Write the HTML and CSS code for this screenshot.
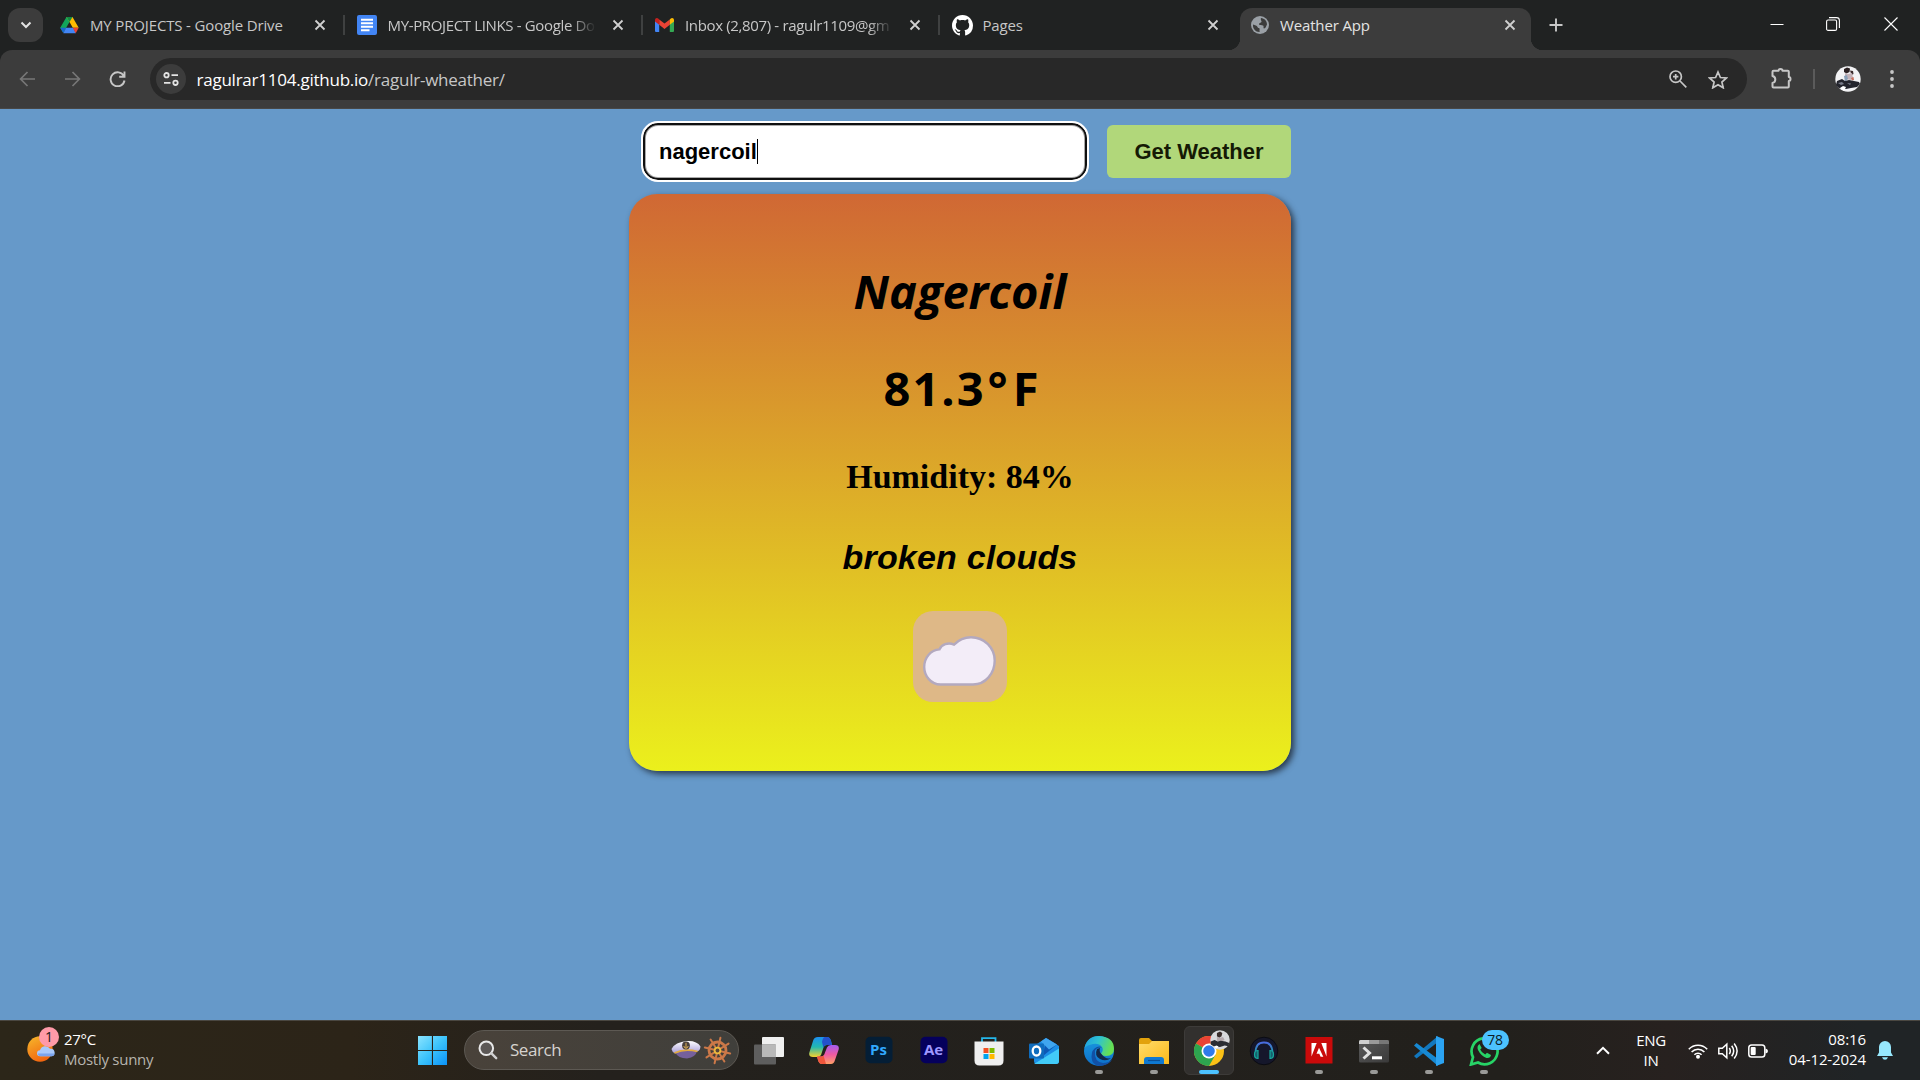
FILE: index.html
```html
<!DOCTYPE html>
<html lang="en">
<head>
<meta charset="utf-8">
<title>Weather App</title>
<link rel="stylesheet" href="styles.css">
</head>
<body>
<svg class="defs" aria-hidden="true">
  <defs>
    <symbol id="close" viewBox="0 0 12 12"><path d="M1.5 1.5l9 9M10.500 1.500l-9 9" fill="none" stroke="currentColor" stroke-width="1.800"/></symbol>
    <linearGradient id="gSun" x1="0" y1="0" x2="0.500" y2="1"><stop offset="0" stop-color="#f6b92c"/><stop offset="1" stop-color="#f2660f"/></linearGradient>
    <linearGradient id="gWin" x1="0" y1="0" x2="1" y2="1"><stop offset="0" stop-color="#8be4ff"/><stop offset="0.500" stop-color="#3cc3fb"/><stop offset="1" stop-color="#0a92f8"/></linearGradient>
    <linearGradient id="gHat" x1="0" y1="0" x2="0" y2="1"><stop offset="0" stop-color="#ffffff"/><stop offset="1" stop-color="#a79bd8"/></linearGradient>
    <linearGradient id="gCopA" x1="0" y1="0" x2="0" y2="1"><stop offset="0" stop-color="#1d8ff0"/><stop offset="0.500" stop-color="#22b8b0"/><stop offset="1" stop-color="#f6d22e"/></linearGradient>
    <linearGradient id="gCopB" x1="0" y1="0" x2="0" y2="1"><stop offset="0" stop-color="#a35cf0"/><stop offset="0.500" stop-color="#ee5aa2"/><stop offset="1" stop-color="#ffa066"/></linearGradient>
    <linearGradient id="gEdge" x1="0" y1="0" x2="1" y2="0.300"><stop offset="0" stop-color="#1c9be4"/><stop offset="0.500" stop-color="#2fc3d0"/><stop offset="1" stop-color="#66e052"/></linearGradient>
    <linearGradient id="gEdgeB" x1="0" y1="0" x2="0" y2="1"><stop offset="0" stop-color="#1b9de2"/><stop offset="1" stop-color="#0d6fc9"/></linearGradient>
    <linearGradient id="gFold" x1="0" y1="0" x2="1" y2="1"><stop offset="0" stop-color="#ffdc6b"/><stop offset="1" stop-color="#fbb918"/></linearGradient>
    <linearGradient id="gHead" x1="0" y1="0" x2="0" y2="1"><stop offset="0" stop-color="#4a6be0"/><stop offset="1" stop-color="#17a79c"/></linearGradient>
    <linearGradient id="gTerm" x1="0" y1="0" x2="1" y2="1"><stop offset="0" stop-color="#5a5a5a"/><stop offset="1" stop-color="#3a3a3a"/></linearGradient>
  </defs>
</svg>

<header class="browser">
  <div class="tab-strip">
    <div class="tab-search"><svg width="12" height="8" viewBox="0 0 12 8"><path d="M1.500 1.500L6 6l4.500-4.500" fill="none" stroke="#e3e3e3" stroke-width="2"/></svg></div>
    <div class="tab">
      <span class="favicon"><svg width="19" height="17" viewBox="0 0 19 17"><path d="M6.500 0h6L9.500 5 3.800 14.800 3 15.500.200 10.800z" fill="#12a55b"/><path d="M6.500 0h6l6.200 10.800h-5.900L9.500 5z" fill="#ffba00"/><path d="M6.500 0h6l-3 5z" fill="#0f8a44"/><path d="M.200 10.800h5.900L3.300 16z" fill="#1967d2"/><path d="M6.100 10.800h7.100l2.600 5.400H3.300z" fill="#4285f4"/><path d="M12.800 10.800h5.900l-3 5.400z" fill="#ea4335"/></svg></span>
      <span class="tab-title">MY PROJECTS - Google Drive</span>
      <svg class="tab-close"><use href="#close"/></svg>
    </div>
    <div class="tab">
      <span class="favicon"><svg width="20" height="20" viewBox="0 0 20 20"><rect width="20" height="20" rx="2" fill="#4285f4"/><path d="M4 4.800h12M4 8.300h12M4 11.800h12M4 15.300h8.500" stroke="#fff" stroke-width="1.900"/></svg></span>
      <span class="tab-title tab-title-fade">MY-PROJECT LINKS - Google Do</span>
      <svg class="tab-close"><use href="#close"/></svg>
    </div>
    <div class="tab">
      <span class="favicon"><svg width="19" height="14" viewBox="0 0 19 14"><path d="M0 2v11q0 1 1 1h3.200V5z" fill="#4285f4"/><path d="M19 2v11q0 1-1 1h-3.200V5z" fill="#34a853"/><path d="M4.200 1.500L9.500 5.600l5.300-4.100v5.200L9.500 11 4.200 6.700z" fill="#ea4335"/><path d="M0 2.200C0 .200 2-.600 3.500.800l.700.600v5.300L0 3.600z" fill="#c5221f"/><path d="M19 2.200c0-2-2-2.800-3.500-1.400l-.700.600v5.300L19 3.600z" fill="#fbbc04"/></svg></span>
      <span class="tab-title tab-title-fade">Inbox (2,807) - ragulr1109@gm</span>
      <svg class="tab-close"><use href="#close"/></svg>
    </div>
    <div class="tab tab-last">
      <span class="favicon"><svg width="21" height="21" viewBox="0 0 16 16"><path fill="#fff" d="M8 0C3.580 0 0 3.580 0 8c0 3.540 2.290 6.530 5.470 7.590.400.070.550-.170.550-.380 0-.190-.010-.820-.010-1.490-2.010.370-2.530-.490-2.690-.940-.090-.230-.480-.940-.820-1.130-.280-.150-.680-.520-.010-.530.630-.010 1.080.580 1.230.820.720 1.210 1.870.870 2.330.660.070-.520.280-.870.510-1.070-1.780-.200-3.640-.890-3.640-3.950 0-.870.310-1.590.820-2.150-.080-.200-.360-1.020.080-2.120 0 0 .670-.210 2.200.820.640-.180 1.320-.270 2-.270s1.360.090 2 .270c1.530-1.040 2.200-.820 2.200-.820.440 1.100.160 1.920.080 2.120.510.560.820 1.270.820 2.150 0 3.070-1.870 3.750-3.650 3.950.290.250.540.730.540 1.480 0 1.070-.010 1.930-.010 2.200 0 .210.150.460.550.380A8.010 8.010 0 0016 8c0-4.420-3.580-8-8-8z"/></svg></span>
      <span class="tab-title">Pages</span>
      <svg class="tab-close"><use href="#close"/></svg>
    </div>
    <div class="tab tab-active">
      <span class="favicon"><svg width="18" height="18" viewBox="0 0 18 18"><circle cx="9" cy="9" r="9" fill="#9aa0a6"/><path d="M2 8.500c2 1 4 1 4.500 2.500s1.500.500 2 1.500-.500 2.500.300 3.500C5 16.300 1.500 13 2 8.500zM10 2c3.500.300 6 3 6 6.500-1 1.500-1 3.500-3 4-1.200-.500.300-2.500-1-3-1.500-.500-3.500.300-4-1.200-.300-1.500 2-1.300 2.500-2.300S9 3.500 10 2z" fill="#3c3c3c"/></svg></span>
      <span class="tab-title">Weather App</span>
      <svg class="tab-close"><use href="#close"/></svg>
    </div>
    <svg class="new-tab" viewBox="0 0 14 14"><path d="M7 .500v13M.500 7h13" stroke="#c7c7c7" stroke-width="1.900"/></svg>
    <div class="window-buttons">
      <svg width="14" height="14" viewBox="0 0 14 14"><path d="M.500 7.500h13" stroke="#fff"/></svg>
      <svg width="14" height="14" viewBox="0 0 14 14"><rect x=".600" y="3" width="10" height="10.400" rx="1.500" fill="none" stroke="#fff" stroke-width="1.100"/><path d="M3 .600h7.500q2.900 0 2.900 2.900v7.500" fill="none" stroke="#fff" stroke-width="1.100"/></svg>
      <svg width="14" height="14" viewBox="0 0 14 14"><path d="M.500.500l13 13M13.500.500l-13 13" stroke="#fff" stroke-width="1.100"/></svg>
    </div>
  </div>
  <div class="toolbar">
    <div class="nav">
      <svg width="17" height="16" viewBox="0 0 17 16"><path d="M8.500 1L1.600 8l6.900 7M1.600 8H16" fill="none" stroke="#777" stroke-width="1.700"/></svg>
      <svg width="17" height="16" viewBox="0 0 17 16"><path d="M8.500 1l6.900 7-6.900 7M15.400 8H1" fill="none" stroke="#777" stroke-width="1.700"/></svg>
      <svg width="17" height="16" viewBox="0 0 17 16"><path d="M14.800 5A7 7 0 1 0 15.500 9.500M15.500.500v5.300h-5.300" fill="none" stroke="#c7c7c7" stroke-width="1.900"/></svg>
    </div>
    <div class="omnibox">
      <span class="site-info"><svg width="16" height="14" viewBox="0 0 16 14"><g fill="none" stroke="#e3e3e3" stroke-width="1.800"><circle cx="3.500" cy="3.200" r="2.200"/><path d="M8.500 3.200H15M1 10.800h6.500"/><circle cx="12.500" cy="10.800" r="2.200"/></g></svg></span>
      <span class="url">ragulrar1104.github.io<span class="url-path">/ragulr-wheather/</span></span>
      <span class="omnibox-actions">
        <svg width="18" height="18" viewBox="0 0 18 18"><g fill="none" stroke="#c7c7c7" stroke-width="1.700"><circle cx="6.700" cy="6.700" r="5.700"/><path d="M11 11l6.300 6.300"/><path d="M6.700 4v5.400M4 6.700h5.400"/></g></svg>
        <svg width="20" height="19" viewBox="0 0 20 19"><path d="M10 2l2.400 5.500 6 .500-4.500 4 1.300 5.800-5.200-3.100-5.200 3.100 1.300-5.800-4.500-4 6-.500z" fill="none" stroke="#c7c7c7" stroke-width="1.700"/></svg>
      </span>
    </div>
    <svg class="extensions" viewBox="0 0 22 21"><path d="M2.500 2.800h5a2 1.700 0 0 1 4 0h5.300q1 0 1 1V9a1.700 2 0 0 1 0 4v5.500q0 1-1 1h-14.300q-1 0-1-1V15q2.800-.700 2.800-3.500T1.500 8V3.800q0-1 1-1z" fill="none" stroke="#c7c7c7" stroke-width="2" stroke-linejoin="round"/></svg>
    <span class="toolbar-divider"></span>
    <svg class="avatar" viewBox="0 0 26 26"><circle cx="13" cy="13" r="12.700" fill="#f3f3f5"/><path d="M9 3l3-1.500 3 1-.500 3.500-3 1.500L9 6z" fill="#2a2021"/><path d="M15 4.500l3 .500.500 3-2 1z" fill="#3a2a2b"/><path d="M10 7l3 1 4-1 1 5-2 2-6-1z" fill="#c3b2b8"/><path d="M9 10l3-1 1 4-3 3z" fill="#8aa0b8"/><path d="M16 12l2.500-1 .500 3-2 .500z" fill="#c8705e"/><path d="M2 15l5-2 3 2 4-1 5 1 5 1 1 2-3 3-6 1-5 1-7-1-3-3z" fill="#23242c"/><path d="M3 17l4-1 2 2-3 1zM12 17l4 .500-1 1.500z" fill="#777b88"/><path d="M5 22l3-2 3 1-2 4z" fill="#fff"/></svg>
    <svg class="menu-dots" viewBox="0 0 4 18"><g fill="#c7c7c7"><circle cx="2" cy="2" r="1.900"/><circle cx="2" cy="9" r="1.900"/><circle cx="2" cy="16" r="1.900"/></g></svg>
  </div>
</header>

<main class="page">
  <form class="search-form">
    <div class="city-input"><span>nagercoil</span><i class="caret"></i></div>
    <button class="submit" type="button">Get Weather</button>
  </form>
  <section class="card">
    <h1 class="city">Nagercoil</h1>
    <p class="temperature">81.3<span class="degree">°</span>F</p>
    <p class="humidity">Humidity: 84%</p>
    <p class="description">broken clouds</p>
    <div class="condition"><svg width="73" height="50" viewBox="0 0 73 50"><path d="M17.500 48.500C8 48.500 1.200 40 1.200 31c0-9 6.300-17 15.300-17.600C18.500 8.500 25 6 31 8.600 36 3.500 41.500 1.200 48 1.200 61.500 1.200 71.700 12 71.700 24.500 71.700 37.500 62.500 48.500 50 48.500z" fill="#f3edf8" stroke="#b3a9bf" stroke-width="2.400"/></svg></div>
  </section>
</main>

<footer class="taskbar">
  <div class="weather-widget">
    <div class="weather-icon">
      <svg width="28" height="26" viewBox="0 0 28 26"><circle cx="13" cy="13" r="12.700" fill="url(#gSun)"/><path d="M13 20.300a3 3 0 0 1 0-6 5.500 5.500 0 0 1 10-1.500 3.800 3.800 0 0 1 1.500 7.500z" fill="#a9c9fb"/><path d="M11 17.500h16.500q0 2.800-3 2.800H13.500q-2.500 0-2.500-2.800z" fill="#7ba4ee"/></svg>
      <span class="weather-badge">1</span>
    </div>
    <div class="weather-text"><div class="weather-temp">27°C</div><div class="weather-state">Mostly sunny</div></div>
  </div>

  <div class="launcher">
    <svg class="start" viewBox="0 0 29 29"><path d="M0 0h13.900v13.900H0zM15 0h14v13.900H15zM0 15h13.900v14H0zM15 15h14v14H15z" fill="url(#gWin)"/></svg>
    <div class="search-box">
      <svg width="20" height="20" viewBox="0 0 20 20"><circle cx="8.300" cy="8.300" r="6.800" fill="#5c5856" stroke="#e8e8e8" stroke-width="2"/><path d="M13.200 13.200l5 5" stroke="#d0d0d0" stroke-width="2.400" stroke-linecap="round"/></svg>
      <span class="search-label">Search</span>
      <svg width="30" height="20" viewBox="0 0 30 20"><path d="M4 12Q14 8 26 11q-1 6-10 7.500Q7 18.500 4 12z" fill="#75609c"/><path d="M.500 9Q4 2 16 1q10-.500 13.500 5.500Q29 11 26 11.500 14 8 4 13.500 1 12 .500 9z" fill="url(#gHat)"/><path d="M3.500 13Q14 8 26.500 11.500" fill="none" stroke="#e2ab3f" stroke-width="1.800"/><circle cx="15" cy="5.500" r="3.900" fill="#49403c"/><path d="M15 2.800v5.200M12.800 6q.500 2.300 2.200 2.300T17.200 6" fill="none" stroke="#dcae52" stroke-width="1"/></svg>
      <svg class="wheel" width="29" height="29" viewBox="-14.500 -14.500 29 29"><g fill="none" stroke="#cb7848" stroke-linecap="round"><circle r="8.500" stroke-width="2.800"/><g stroke-width="2"><path d="M0-13V13" transform="rotate(13)"/><path d="M0-13V13" transform="rotate(58)"/><path d="M0-13V13" transform="rotate(103)"/><path d="M0-13V13" transform="rotate(148)"/></g></g><circle r="3.800" fill="#ecb93d"/><circle r="1.900" fill="#56443a"/></svg>
    </div>
    <div class="apps">
      <div class="app"><svg viewBox="0 0 30 30"><rect x="8" y="1" width="22" height="20" rx="1" fill="#f0f0f0"/><rect x="0" y="8.500" width="22" height="20" rx="1" fill="#5e5e5e"/><path d="M8 8.500h14V21H8z" fill="#b9b9b9"/></svg></div>
      <div class="app"><svg viewBox="0 0 30 30"><path d="M9 1h9q3 0 4 4l1 4h-5q-3 0-4 4l-2 6q-1 2-4 2H4q-5 0-3.500-5L4 5q1-4 5-4z" fill="url(#gCopA)"/><path d="M16 1h2q3 0 4 4l1 4h-5q-3 0-3.500 3L13 6q1-5 3-5z" fill="#2451cc"/><path d="M22 28h-9q-3 0-4-4l-1-3.500h4q3 0 4-4l2-5q1-2.500 4-2.500h4q5 0 3.500 5L26 24q-1 4-4 4z" fill="url(#gCopB)"/><path d="M13 28q-3 0-4-4l-1-3.500h4q1.500 0 2.500-1L17 28z" fill="#f0563c"/></svg></div>
      <div class="app"><svg viewBox="0 0 30 30"><rect x="1.500" y=".800" width="27" height="26.500" rx="5" fill="#041e36"/></svg><b class="adobe ps">Ps</b></div>
      <div class="app"><svg viewBox="0 0 30 30"><rect x="1.500" y=".800" width="27" height="26.500" rx="5" fill="#05005c"/></svg><b class="adobe ae">Ae</b></div>
      <div class="app"><svg viewBox="0 0 30 30"><path d="M8 7V2.200h13.500V7" fill="none" stroke="#25b7ea" stroke-width="1.800"/><path d="M.500 5.500h29v19q0 5-5 5h-19q-5 0-5-5z" fill="#efefef"/><path fill="#f25022" d="M9.500 12h5v5h-5z"/><path fill="#7fba00" d="M15.500 12h5v5h-5z"/><path fill="#00a4ef" d="M9.500 18h5v5h-5z"/><path fill="#ffb900" d="M15.500 18h5v5h-5z"/></svg></div>
      <div class="app"><svg viewBox="0 0 30 30"><path d="M5 10L17 2l13 8v15q0 3-3 3H8q-3 0-3-3z" fill="#1c8ee6"/><path d="M17 2l11 6.500L14 20z" fill="#0d58b5"/><path d="M17 2l11 6.500-8 5-8-8z" fill="#3fa5ef"/><path d="M5 28l25-15.500V25q0 3-3 3z" fill="#42cbf8"/><rect y="7.500" width="15" height="15" rx="1" fill="#0f6cbd"/><ellipse cx="7.500" cy="15" rx="3.800" ry="4.500" fill="none" stroke="#fff" stroke-width="2.300"/></svg></div>
      <div class="app running"><svg viewBox="0 0 30 30"><circle cx="15" cy="15" r="15" fill="url(#gEdgeB)"/><path d="M.500 12Q3 0 15 0q15 1 15 13 0 7-8 7-5 0-5-2.500 3-3.500 1-6.500-3-4-9-3Q3 9 .500 12z" fill="url(#gEdge)"/><path d="M11 15q-1 11 8 12 6 0 9.500-4-4 7-13.500 7Q8 29 7.500 21q0-8 5.500-10 3-1 5 .500-6-.500-7 3.500z" fill="#1150a5"/><path d="M17 17.500q-2-2-1-5.500l-3 1q-3 7 3 10 6 3 11-1-5 2-10-4.500z" fill="#13294a"/></svg></div>
      <div class="app running"><svg viewBox="0 0 30 30"><path d="M0 4q0-2 2-2h8l3 3h15q2 0 2 2v6H0z" fill="#e2a20c"/><path d="M0 8h10l3-3h17v23H0z" fill="url(#gFold)"/><path d="M5 28v-4q0-3 3-3h14q3 0 3 3v4z" fill="#0f79d2"/><path d="M9 24.500h12" stroke="#0a4f96" stroke-width="1.200"/></svg></div>
      <div class="app running active"><svg viewBox="0 0 30 30"><circle cx="15" cy="15" r="15" fill="#fbc116"/><path d="M15 15L2 7.500A15 15 0 0 1 28 7.500H15z" fill="#ea4335"/><path d="M2 7.500A15 15 0 0 0 15 30l6.500-11.300L15 15z" fill="#2da44f"/><circle cx="15" cy="15" r="7.500" fill="#fff"/><circle cx="15" cy="15" r="5.800" fill="#2f7bea"/></svg>
        <svg class="profile-badge" viewBox="0 0 26 26"><circle cx="13" cy="13" r="12.700" fill="#d9d9dc"/><path d="M9 4l4-2 3 2-1 4-3 2-3-2z" fill="#3a2d2b"/><path d="M9 9l4 1 4-1 2 4-4 2-6-1z" fill="#b4a8ac"/><path d="M1 15l5-2 4 2 4-1 6 1 5 2-1 4-5-1-6 2-8-1-4-2z" fill="#2b2c33"/><path d="M5 22l3-2 3 1-2 3z" fill="#fff"/></svg></div>
      <div class="app"><svg viewBox="0 0 30 30"><circle cx="15" cy="15" r="13.800" fill="#15172b" stroke="#0a0b12" stroke-width="1"/><path d="M6.500 20v-3q0-10.500 8.500-10.500T23.500 17v3" fill="none" stroke="url(#gHead)" stroke-width="1.800"/><path d="M9 14.500q-3.500 0-3.500 4T9 22.500zM21 14.500q3.500 0 3.500 4T21 22.500z" fill="#16606e" stroke="#17a79c" stroke-width="1.200"/></svg></div>
      <div class="app running"><svg viewBox="0 0 30 30"><rect x="1.500" y="1" width="27" height="26.500" fill="#ca0a0a"/><path d="M7.500 7h5.200L7.500 20.500zM22.500 7h-5.200l5.200 13.500zM15 11.800l4.300 9h-2.700l-1.300-3h-2.800z" fill="#fff"/></svg></div>
      <div class="app running"><svg viewBox="0 0 30 30"><rect y="4" width="30" height="22.500" rx="1.500" fill="url(#gTerm)"/><path d="M0 8V5.500Q0 4 1.500 4H10v4z" fill="#cfcfcf"/><path d="M10 4h10v4H10z" fill="#9a9a9a"/><path d="M20 4h8.500Q30 4 30 5.500V8H20z" fill="#777"/><path d="M4.500 11.500l6 5.500-6 5.500" fill="none" stroke="#e0e0e0" stroke-width="3"/><path d="M13 21.800h10" stroke="#fff" stroke-width="3"/></svg></div>
      <div class="app running"><svg viewBox="0 0 30 30"><path d="M0 20l2.500 2.500L24 6V0z" fill="#1277bd"/><path d="M0 9.500L2.500 7 24 23v7z" fill="#1789d3"/><path d="M22 0l8 3v24l-8 3z" fill="#2ba3f2"/></svg></div>
      <div class="app running"><svg viewBox="0 0 30 30"><path d="M2 28.500l2-7.300A13 13 0 1 1 9 26.500z" fill="none" stroke="#27d366" stroke-width="2.700"/><path d="M10.500 8q-3 2-1.500 6 3 6 8.500 8 4 .500 4.500-3l-4-2.200-1.800 1.800q-3.500-1.600-5-5l1.500-1.600z" fill="#27d366"/></svg><span class="count-badge">78</span></div>
    </div>
  </div>

  <div class="tray">
    <svg width="14" height="9" viewBox="0 0 14 9"><path d="M1 7.800l6-6 6 6" fill="none" stroke="#fff" stroke-width="2"/></svg>
    <div class="language"><div>ENG</div><div>IN</div></div>
    <div class="status">
      <svg width="20" height="16" viewBox="0 0 20 16"><g fill="none" stroke="#fff" stroke-width="1.600"><path d="M.800 6.200a12.600 12.600 0 0 1 18.400 0M3.600 9a8.800 8.800 0 0 1 12.800 0M6.400 11.700a5.100 5.100 0 0 1 7.200 0"/></g><circle cx="10" cy="13.700" r="2" fill="#fff"/></svg>
      <svg width="20" height="18" viewBox="0 0 20 18"><g fill="none" stroke="#fff" stroke-width="1.500"><path d="M.800 6.300h3.500L8.800 2.200v13.600l-4.500-4.100H.800zM11.300 6q2 3 0 6M13.700 3.700q4 5.300 0 10.600M16.200 1.500q5.800 7.500 0 15"/></g></svg>
      <svg width="20" height="14" viewBox="0 0 20 14"><rect x=".800" y="1" width="16" height="12" rx="2.800" fill="none" stroke="#fff" stroke-width="1.500"/><path d="M17.500 4.500q2.500.500 2.500 2.500t-2.500 2.500z" fill="#fff"/><rect x="2.700" y="3" width="5" height="8" rx="1" fill="#fff"/></svg>
    </div>
    <div class="clock"><div>08:16</div><div>04-12-2024</div></div>
    <svg class="bell" width="16" height="19" viewBox="0 0 16 19"><path d="M8 0a6 6 0 0 1 6 6v5.500l2 3.500H0l2-3.500V6A6 6 0 0 1 8 0zM5 16.200h6q-1 2.500-3 2.500t-3-2.500z" fill="#97e8fd"/></svg>
  </div>
</footer>
</body>
</html>
```
FILE: styles.css
```css
* { box-sizing: border-box; }
body { margin: 0; width: 1920px; height: 1080px; overflow: hidden; display: flex; flex-direction: column; background: #6699c9; font-family: "Open Sans", "Noto Sans", sans-serif; }
svg { display: block; flex: none; }
.defs { position: absolute; width: 0; height: 0; }

/* browser window */
.browser { flex: none; height: 109px; background: #202222; }
.tab-strip { display: flex; height: 50px; padding-left: 8px; }
.tab-search { width: 35px; height: 34px; margin: 8px 3.5px 0 0; border-radius: 12px; background: #3c3c3c; display: grid; place-items: center; }
.tab { flex: none; width: 297.500px; height: 50px; padding-left: 12px; display: flex; align-items: center; position: relative; color: #c7c7c7; }
.tab:not(.tab-last):not(.tab-active)::after { content: ""; position: absolute; right: -1px; top: 15px; width: 2px; height: 20px; background: #3f4141; }
.favicon { width: 22px; display: grid; place-items: center; }
.tab-title { width: 214px; margin-left: 9.500px; font-size: 15px; line-height: 20px; letter-spacing: -0.150px; white-space: nowrap; }
.tab-title-fade { letter-spacing: -0.350px; -webkit-mask-image: linear-gradient(90deg, #000 183px, transparent 208px); mask-image: linear-gradient(90deg, #000 183px, transparent 208px); }
.tab-close { width: 12px; height: 12px; margin-left: 10px; color: #d0d0d0; }
.tab-active { color: #e3e3e3; isolation: isolate; }
.tab-active::before { content: ""; position: absolute; z-index: -1; inset: 8px 3.500px 0; border-radius: 12px 12px 0 0; background: #3c3c3c; }
.tab-active::after { content: ""; position: absolute; z-index: -1; left: -8.500px; right: -8.500px; bottom: 0; height: 12px; background: radial-gradient(circle at 0 0, transparent 12px, #3c3c3c 12.500px) left / 12px 12px no-repeat, radial-gradient(circle at 100% 0, transparent 12px, #3c3c3c 12.500px) right / 12px 12px no-repeat; }
.new-tab { width: 14px; height: 14px; margin: 18px 0 0 14.500px; }
.window-buttons { display: flex; gap: 43px; margin: 17px 22px 0 auto; }
.window-buttons svg:nth-child(2) { margin: 0 1px 0 -1px; }
.toolbar { height: 59px; display: flex; align-items: center; background: #3c3c3c; border-radius: 12px 12px 0 0; border-bottom: 1px solid #474747; padding-left: 19px; }
.nav { display: flex; gap: 28px; width: 131px; }
.omnibox { width: 1597px; height: 42px; border-radius: 21px; background: #282828; display: flex; align-items: center; padding: 0 19px 0 6px; }
.site-info { width: 30px; height: 30px; border-radius: 50%; background: #3c3c3c; display: grid; place-items: center; }
.url { margin-left: 10.500px; font-size: 17px; letter-spacing: -0.240px; color: #fff; white-space: nowrap; }
.url-path { color: #c7c7c7; }
.omnibox-actions { display: flex; gap: 21px; margin-left: auto; align-items: center; }
.extensions { width: 22px; height: 21px; margin-left: 23.500px; margin-bottom: 2px; }
.toolbar-divider { width: 2px; height: 20px; background: #5b5b5b; margin: 0 20px 0 20px; }
.avatar { width: 26px; height: 26px; }
.menu-dots { width: 4px; height: 18px; margin-left: 29px; }

/* weather page */
.page { flex: 1; width: 662px; margin: 0 auto; padding-top: 12px; }
.search-form { display: flex; align-items: center; height: 61px; padding-left: 12px; justify-content: space-between; }
.city-input { width: 448px; height: 61px; padding-left: 16px; border: 2px solid #fff; border-radius: 17px; background: #fff; box-shadow: inset 0 0 0 2px #101010, inset 0 0 0 3px #aaa; display: flex; align-items: center; font: bold 22px "Liberation Sans", Arial, sans-serif; color: #000; }
.caret { width: 1px; height: 25px; background: #000; }
.submit { width: 184px; height: 53px; border: 0; padding: 0; border-radius: 6px; background: #b1d77a; color: #151a05; font: bold 22px "Liberation Sans", Arial, sans-serif; }
.card { height: 577px; margin-top: 12px; border-radius: 28px; background: linear-gradient(#d06834, #dba42a 45%, #ebf01c); box-shadow: 3px 3px 6px rgba(20, 25, 35, 0.750); display: flex; flex-direction: column; align-items: center; color: #000; text-align: center; font-weight: bold; }
.card > * { white-space: nowrap; }
.city { margin: 67px 0 0; font: italic bold 47px/60px "Open Sans", sans-serif; letter-spacing: 0; }
.temperature { margin: 37px 0 0 4px; font: bold 47px/60px "Open Sans", sans-serif; letter-spacing: 2px; }
.degree { margin: 0 3px 0 2px; }
.humidity { margin: 39px 0 0; font: bold 34px/40px "Liberation Serif", "Times New Roman", serif; }
.description { margin: 40px 0 0; font: italic bold 34px/40px "Liberation Sans", Arial, sans-serif; letter-spacing: 0.200px; }
.condition { width: 94px; height: 91px; margin-top: 34px; border-radius: 20px; background: #deb887; display: grid; place-items: center; padding: 8px 1px 0 0; }

/* desktop taskbar */
.taskbar { flex: none; height: 60px; display: flex; border-top: 1px solid #4a4741; background: linear-gradient(90deg, #2c2619 0, #2c2418 350px, #24211d 600px, #22201c 1500px, #27211f 1670px, #202426 1860px); color: #fff; font-size: 15px; line-height: 20px; }
.weather-widget { display: flex; width: 418px; padding-left: 27px; }
.weather-icon { width: 37px; height: 59px; padding-top: 15px; position: relative; }
.weather-badge { position: absolute; left: 12px; top: 6px; width: 20px; height: 20px; border-radius: 50%; background: #ff9aa8; color: #201718; text-align: center; font-size: 14px; }
.weather-text { padding-top: 8px; letter-spacing: -0.270px; }
.weather-state { color: #b7b4ae; }
.launcher { display: flex; align-items: center; }
.start { width: 29px; height: 29px; margin-right: 17px; }
.search-box { width: 275px; height: 40px; margin-top: -1px; border-radius: 20px; border: 1px solid #5d5953; background: linear-gradient(90deg, #49423a, #403f3b); display: flex; align-items: center; padding: 0 6px 0 13px; }
.search-label { margin: 0 auto 0 12px; font-size: 17px; letter-spacing: -0.450px; color: #d6d3cf; }
.wheel { margin-left: 2px; }
.apps { display: flex; margin-left: 4.500px; }
.app { width: 50px; height: 49px; margin: 0 5px 0 0; border-radius: 6px; display: grid; place-items: center; position: relative; border: 1px solid transparent; }
.app > svg { width: 30px; height: 30px; }
.running::after { content: ""; position: absolute; left: 20px; bottom: 0; width: 8px; height: 4px; border-radius: 2px; background: #9a9a98; }
.active { background: #32302e; border-color: #3d3b39; }
.active::after { left: 14px; width: 20px; background: #4cc2ff; }
.adobe { position: absolute; inset: 11px 0 auto; text-align: center; font-size: 15px; line-height: 22px; }
.ps { color: #31a8ff; }
.ae { color: #9d97ff; }
.app > .profile-badge { position: absolute; left: 25px; top: 3px; width: 20px; height: 20px; }
.count-badge { position: absolute; left: 22px; top: 3px; width: 27px; height: 20px; border-radius: 10px; background: #4cc2ff; color: #0c1c25; text-align: center; font-size: 14px; letter-spacing: -0.300px; }
.tray { margin-left: auto; display: flex; align-items: center; padding-right: 27px; }
.language { width: 50px; margin-left: 16px; text-align: center; padding-bottom: 1px; letter-spacing: -0.300px; }
.status { display: flex; align-items: center; gap: 10px; margin-left: 12px; }
.clock { width: 90px; margin: 0 11px 0 8px; text-align: right; padding-bottom: 3px; letter-spacing: -0.100px; white-space: nowrap; }
```
